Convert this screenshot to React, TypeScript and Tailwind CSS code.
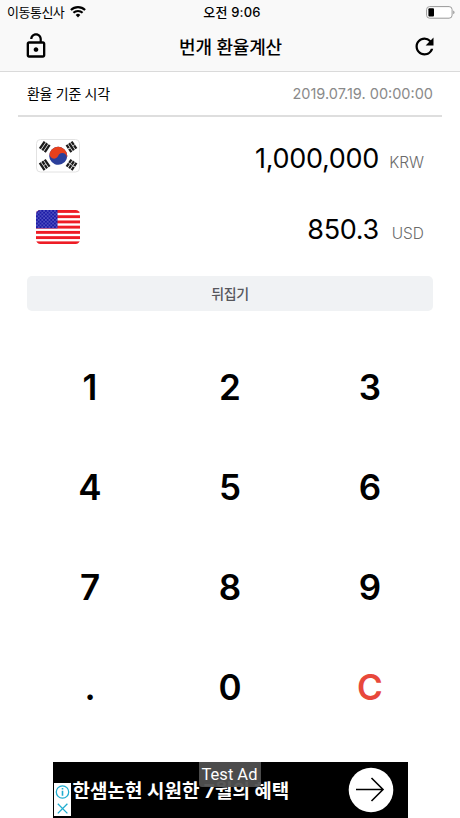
import { MdLockOpen, MdRefresh } from 'react-icons/md';

const KEYS = ['1', '2', '3', '4', '5', '6', '7', '8', '9', '.', '0', 'C'];

function WifiIcon() {
  return (
    <svg viewBox="0 0 16 12" className="w-4 h-3">
      <path d="M8 11.4 5.7 8.9a3.4 3.4 0 0 1 4.6 0z" fill="#000" />
      <path d="M3.4 6.8a6.6 6.6 0 0 1 9.2 0" fill="none" stroke="#000" strokeWidth="2.1" />
      <path d="M0.9 4a10.2 10.2 0 0 1 14.2 0" fill="none" stroke="#000" strokeWidth="2.1" />
    </svg>
  );
}

function BatteryIcon() {
  return (
    <svg viewBox="0 0 29 13" className="w-[29px] h-[13px]">
      <rect x="0.6" y="0.6" width="25.5" height="11.6" rx="3" fill="#fff" stroke="#999" />
      <rect x="2.4" y="2.3" width="5.6" height="8.2" rx="1" fill="#000" />
      <path d="M27.3 4.5c1.6.8 1.6 3 0 3.8z" fill="#888" />
    </svg>
  );
}

// Three stacked bars; `broken` lists the ones split in the middle
function Trigram({ x, y, angle, broken }: { x: number; y: number; angle: number; broken: number[] }) {
  return (
    <g transform={`translate(${x} ${y}) rotate(${angle})`} fill="#1c1c1c">
      {[-3, 0, 3].map((dy, i) => (
        <g key={dy}>
          <rect x="-4.3" y={dy - 1.1} width="8.6" height="2.3" />
          {broken.includes(i) && <rect x="-0.35" y={dy - 1.1} width="0.7" height="2.3" fill="#fff" />}
        </g>
      ))}
    </g>
  );
}

function KoreaFlag() {
  return (
    <svg viewBox="0 0 44 34" className="w-11 h-[34px]">
      <rect x="0.5" y="0.5" width="43" height="32.5" rx="4" fill="#fff" stroke="#e2e2e2" />
      <g transform="rotate(22 22.2 16.8)">
        <circle cx="22.2" cy="16.8" r="9" fill="#2b3f9b" />
        <path d="M13.2 16.8A9 9 0 0 1 31.2 16.8A4.5 4.5 0 0 0 22.2 16.8A4.5 4.5 0 0 1 13.2 16.8z" fill="#e8401c" />
      </g>
      <Trigram x={8.7} y={7.8} angle={-56} broken={[]} />
      <Trigram x={35.5} y={7.8} angle={56} broken={[0, 2]} />
      <Trigram x={8.7} y={25.8} angle={56} broken={[1]} />
      <Trigram x={35.5} y={25.8} angle={-56} broken={[0, 1, 2]} />
    </svg>
  );
}

function UsaFlag() {
  return (
    <svg viewBox="0 0 44 34" className="w-11 h-[34px]">
      <defs>
        <clipPath id="usa">
          <rect width="44" height="34" rx="4.5" />
        </clipPath>
        <pattern id="stars" width="3.6" height="3.6" patternUnits="userSpaceOnUse">
          <circle cx="0.9" cy="0.9" r="0.6" fill="#a9a9ee" />
          <circle cx="2.7" cy="2.7" r="0.6" fill="#a9a9ee" />
        </pattern>
      </defs>
      <g clipPath="url(#usa)">
        <rect width="44" height="34" fill="#fff" />
        {[0, 1, 2, 3, 4, 5, 6].map((i) => (
          <rect key={i} y={i * 5.231} width="44" height="2.9" fill="#ee1c25" />
        ))}
        <rect width="21.5" height="18.3" fill="#1b1ba6" />
        <rect width="21.5" height="18.3" fill="url(#stars)" />
      </g>
    </svg>
  );
}

function CurrencyRow({ flag, amount, code }: { flag: React.ReactNode; amount: string; code: string }) {
  return (
    <div className="flex h-[71px] items-center justify-between px-9">
      {flag}
      <div className="flex items-baseline pt-1.5">
        <span className="text-[27px] leading-8 tracking-[-0.3px]">{amount}</span>
        <span className="w-[45px] text-right text-[15.5px] font-light text-[#6b6b6b]">{code}</span>
      </div>
    </div>
  );
}

function AdBanner() {
  return (
    <div className="relative mx-auto mt-[25px] flex h-14 w-[355px] items-center justify-between overflow-hidden bg-black pl-5 pr-3.5">
      <p className="whitespace-nowrap pt-1 text-[19px] font-bold leading-7 text-white">한샘논현 시원한 7월의 혜택</p>
      <svg viewBox="0 0 46 46" className="size-[46px]">
        <circle cx="23" cy="23" r="22.3" fill="#fff" />
        <path d="M8 22.5h27M23.5 11l11.5 11.5L23.5 34" fill="none" stroke="#000" strokeWidth="1.6" />
      </svg>
      <div className="absolute left-px top-[21px] h-[33px] w-[17px] bg-white">
        <svg viewBox="0 0 17 33" className="h-[33px] w-[17px]" fill="none" stroke="#20add0" strokeWidth="1.3">
          <circle cx="8.5" cy="9" r="6.2" />
          <path d="M8.5 7.8v5M8.5 5v1.6" strokeWidth="1.6" />
          <path d="m3.8 20.8 9.6 9.6m0-9.6-9.6 9.6" />
        </svg>
      </div>
      <div className="absolute left-[146px] top-0 flex h-[25px] w-[62px] items-center justify-center rounded-b-[3px] bg-[#505050]/95 pt-0.5 font-[Roboto,sans-serif] text-[16.5px] text-white">
        Test Ad
      </div>
    </div>
  );
}

export default function App() {
  return (
    <div className="h-[818px] w-[460px] overflow-hidden bg-white font-['Inter','Noto_Sans_CJK_KR',sans-serif] text-black">
      {/* Status bar + header */}
      <header className="h-[72px] border-b border-[#dadada] bg-[#f9f9f9]">
        <div className="grid h-6 grid-cols-3 items-center pl-[7px] pr-[5px] text-[13px] leading-6">
          <div className="flex items-center gap-1.5">
            <span className="tracking-[-0.5px]">이동통신사</span>
            <WifiIcon />
          </div>
          <span className="pl-0.5 text-center font-medium tracking-[0.2px]">오전 9:06</span>
          <div className="flex justify-end">
            <BatteryIcon />
          </div>
        </div>
        <div className="flex h-[46px] items-center justify-between px-[22px]">
          <MdLockOpen className="mb-0.5 size-7" />
          <h1 className="text-[18px] font-medium tracking-[-0.2px]">번개 환율계산</h1>
          <MdRefresh className="mb-0.5 size-[27px]" />
        </div>
      </header>

      {/* Rate timestamp */}
      <div className="mx-[18px] flex h-[45px] items-center justify-between border-b-2 border-[#dedede] px-[9px]">
        <span className="text-[14px] tracking-[-0.3px]">환율 기준 시각</span>
        <span className="text-[14.5px] text-[#8a8a8a]">2019.07.19. 00:00:00</span>
      </div>

      <div className="pt-[3px]">
        <CurrencyRow flag={<KoreaFlag />} amount="1,000,000" code="KRW" />
        <CurrencyRow flag={<UsaFlag />} amount="850.3" code="USD" />
      </div>

      <button className="mx-[27px] mt-[14px] block h-[35px] w-[406px] rounded-[5px] bg-[#f0f2f4] text-[14px] font-medium tracking-[-0.3px] text-[#57575c]">
        뒤집기
      </button>

      {/* Keypad */}
      <div className="mt-[26px] grid grid-cols-3 px-5">
        {KEYS.map((key) => (
          <button
            key={key}
            className={`h-[100px] text-[35px] font-semibold ${key === 'C' ? 'text-[#e8483b]' : 'text-black'}`}
          >
            {key}
          </button>
        ))}
      </div>

      <AdBanner />
    </div>
  );
}
